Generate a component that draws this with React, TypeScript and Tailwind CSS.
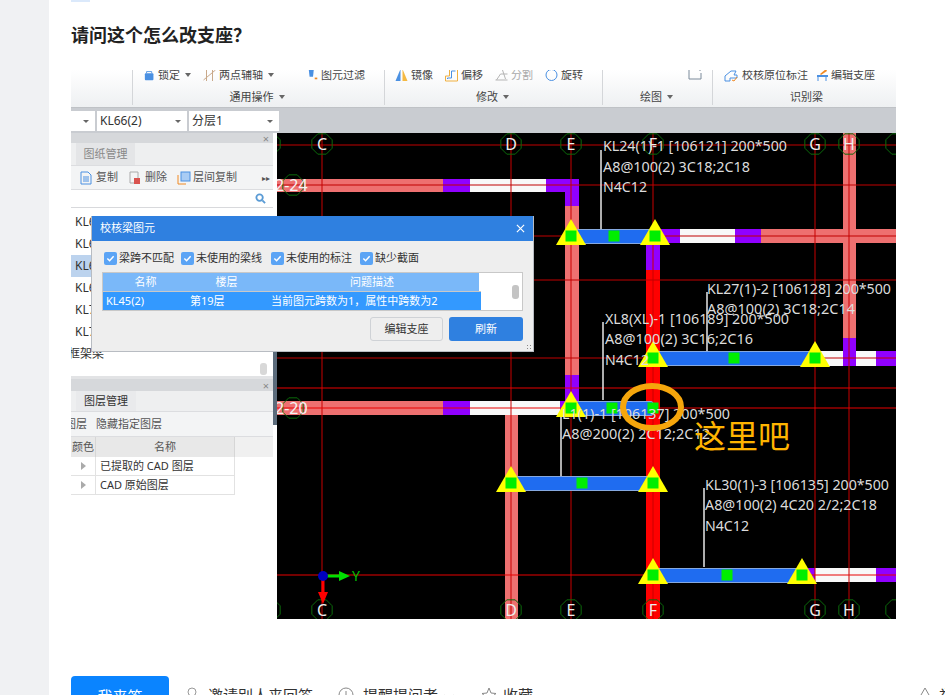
import type { ReactNode } from 'react'

const vLines = [322, 511, 571, 653, 815, 849]
const hLines = [145, 185, 236, 280, 358, 388, 408, 575]
const axes: [string, number][] = [['', 270], ['C', 322], ['D', 511], ['E', 571], ['F', 653], ['G', 815], ['H', 849], ['', 896]]

// beam rects: x, y, w, h, fill
const beams: [number, number, number, number, string][] = [
  [277, 179, 166, 13, '#ee7070'],
  [443, 179, 27, 13, '#9000ff'],
  [470, 179, 76, 13, '#f8f8f8'],
  [546, 179, 33, 13, '#9000ff'],
  [565, 192, 14, 14, '#9000ff'],
  [565, 206, 14, 169, '#ee7070'],
  [565, 375, 14, 26, '#9000ff'],
  [843, 133, 13, 205, '#ee7070'],
  [843, 338, 13, 28, '#9000ff'],
  [655, 229, 25, 14, '#9000ff'],
  [680, 229, 55, 14, '#f8f8f8'],
  [735, 229, 26, 14, '#9000ff'],
  [761, 229, 135, 14, '#ee7070'],
  [646, 243, 14, 27, '#9000ff'],
  [646, 270, 14, 349, '#ff0000'],
  [798, 351, 17, 15, '#9000ff'],
  [815, 351, 28, 15, '#f8f8f8'],
  [856, 351, 20, 15, '#f8f8f8'],
  [876, 351, 20, 15, '#9000ff'],
  [277, 401, 166, 14, '#ee7070'],
  [443, 401, 27, 14, '#9000ff'],
  [470, 401, 90, 14, '#f8f8f8'],
  [560, 401, 19, 14, '#9000ff'],
  [505, 415, 13, 204, '#ee7070'],
  [802, 568, 14, 14, '#9000ff'],
  [815, 568, 61, 14, '#f8f8f8'],
  [876, 568, 20, 14, '#9000ff'],
]

// blue beams: x1, x2, center y, mid square, triangle xs
const spans: [number, number, number, number, number[]][] = [
  [576, 654, 236, 614, [571, 655]],
  [654, 815, 358, 734, [653, 815]],
  [572, 653, 408, 612, [571]],
  [511, 653, 483, 582, [511, 653]],
  [653, 802, 575, 727, [653, 802]],
]

const leaders: [number, number, number][] = [
  [601, 150, 229],
  [707, 292, 351],
  [603, 322, 400],
  [561, 415, 476],
  [704, 488, 567],
]

const notes: [number, number, number, string][] = [
  [603, 151, 184, 'KL24(1)-1 [106121] 200*500'],
  [603, 172, 147, 'A8@100(2) 3C18;2C18'],
  [603, 192, 44, 'N4C12'],
  [707, 294, 184, 'KL27(1)-2 [106128] 200*500'],
  [707, 314, 148, 'A8@100(2) 3C18;2C14'],
  [605, 324, 184, 'XL8(XL)-1 [106189] 200*500'],
  [605, 344, 148, 'A8@100(2) 3C16;2C16'],
  [605, 365, 44, 'N4C12'],
  [562, 419, 168, 'L1(1)-1 [106137] 200*500'],
  [562, 439, 148, 'A8@200(2) 2C12;2C12'],
  [705, 490, 184, 'KL30(1)-3 [106135] 200*500'],
  [705, 510, 172, 'A8@100(2) 4C20 2/2;2C18'],
  [705, 531, 44, 'N4C12'],
]

function Octagon({ x, y }: { x: number; y: number }) {
  const r = 11
  const pts = Array.from({ length: 8 }, (_, i) => {
    const a = (Math.PI / 4) * i + Math.PI / 8
    return `${x + r * Math.cos(a)},${y + r * Math.sin(a)}`
  }).join(' ')
  return <polygon points={pts} fill="none" stroke="#0b6b0b" strokeWidth="1" />
}

function CadCanvas() {
  return (
    <svg viewBox="277 133 619 486" className="block w-[619px] h-[486px] bg-black">
      {beams.map(([x, y, w, h, fill], i) => (
        <rect key={i} x={x} y={y} width={w} height={h} fill={fill} />
      ))}
      {vLines.map((x) => (
        <line key={x} x1={x} x2={x} y1={133} y2={619} stroke="#c80000" strokeWidth="1" />
      ))}
      {hLines.map((y) => (
        <line key={y} x1={277} x2={896} y1={y} y2={y} stroke={y < 380 ? '#c00000' : '#e80000'} strokeWidth="1" />
      ))}
      {leaders.map(([x, y1, y2]) => (
        <line key={x} x1={x} x2={x} y1={y1} y2={y2} stroke="#e8e8e8" strokeWidth="1.5" />
      ))}
      {spans.map(([x1, x2, y]) => (
        <rect key={y} x={x1} y={y - 6.5} width={x2 - x1} height={14} rx="2" fill="#1f6cf0" stroke="#86a9e0" strokeWidth="1" />
      ))}
      {spans.map(([, , y, , tris]) =>
        tris.map((x) => (
          <polygon key={`${x}-${y}`} points={`${x},${y - 17} ${x - 15},${y + 9} ${x + 15},${y + 9}`} fill="#ffff00" />
        )),
      )}
      {spans.map(([x1, x2, y, mid, tris]) =>
        [tris[0], mid, tris[1] ?? x2].map((x) => (
          <rect key={`${x}-${y}`} x={x - 5.5} y={y - 5.5} width={11} height={11} fill="#00ee00" />
        )),
      )}
      {axes.map(([label, x]) => (
        <g key={x}>
          <Octagon x={x} y={144} />
          <Octagon x={x} y={610} />
          {label && <text x={x} y={150} textAnchor="middle" fontSize="16" fill="#eeeeee">{label}</text>}
          {label && <text x={x} y={616} textAnchor="middle" fontSize="16" fill="#eeeeee">{label}</text>}
        </g>
      ))}
      <Octagon x={293} y={185} />
      <Octagon x={293} y={408} />
      <text x={275} y={191} fontSize="16" fill="#f4f4f4">2-24</text>
      <text x={275} y={414} fontSize="16" fill="#f4f4f4">2-20</text>
      {notes.map(([x, y, w, t]) => (
        <text key={t + y} x={x} y={y} fontSize="14" fill="#dcdcdc" textLength={w} lengthAdjust="spacingAndGlyphs">{t}</text>
      ))}
      <ellipse cx="652" cy="407" rx="29" ry="21" fill="none" stroke="#f5a60c" strokeWidth="6" />
      <text x="694" y="448" fontSize="32" fill="#ffb400">这里吧</text>
      <line x1="323" y1="576" x2="342" y2="576" stroke="#00e000" strokeWidth="3" />
      <polygon points="339,571 350,576 339,581" fill="#00e000" />
      <text x="352" y="581" fontSize="14" fill="#00c000">Y</text>
      <line x1="323" y1="576" x2="323" y2="596" stroke="#ff0000" strokeWidth="3" />
      <polygon points="318,592 328,592 323,604" fill="#ff0000" />
      <circle cx="323" cy="576" r="5" fill="#0000c0" />
    </svg>
  )
}

function Caret() {
  return <span className="ml-[5px] w-0 h-0 border-x-[3px] border-x-transparent border-t-[4px] border-t-[#666]" />
}

function Tool({ icon, label, caret, className, muted }: { icon: ReactNode; label: string; caret?: boolean; className: string; muted?: boolean }) {
  return (
    <div className={`flex items-center shrink-0 ${className}`}>
      {icon}
      <span className={`ml-[2px] ${muted ? 'text-[#aaa]' : 'text-[#444]'}`}>{label}</span>
      {caret && <Caret />}
    </div>
  )
}

function Ico({ children, className }: { children: ReactNode; className?: string }) {
  return (
    <svg viewBox="0 0 14 14" className={`h-[14px] shrink-0 ${className ?? 'w-[14px]'}`} fill="none">
      {children}
    </svg>
  )
}

function RibbonGroup({ title, caret, className, titleClass, children }: { title: string; caret?: boolean; className: string; titleClass: string; children: ReactNode }) {
  return (
    <div className={`flex flex-col border-l border-[#d4d6d9] h-[35px] ${className}`}>
      <div className="flex h-[10px] leading-[10px] items-center">{children}</div>
      <div className={`mt-[9px] h-[16px] flex items-center justify-center text-[#444] ${titleClass}`}>
        {title}
        {caret && <Caret />}
      </div>
    </div>
  )
}

function Ribbon() {
  return (
    <div className="flex h-[38px] overflow-hidden bg-gradient-to-b from-white to-[#eef0f2] border-b border-[#bfc2c6] text-[11px]">
      <div className="w-[61px] shrink-0" />
      <RibbonGroup title="通用操作" caret className="w-[252px]" titleClass="pr-[3px]">
        <div className="pl-[11px] flex">
          <Tool
            className="w-[58px]"
            caret
            label="锁定"
            icon={<Ico className="w-[12px]"><rect x="1" y="5" width="10" height="8" rx="1" fill="#4a90e2" /><path d="M3 5V3h6v2" stroke="#4a90e2" /></Ico>}
          />
          <Tool
            className="w-[105px]"
            caret
            label="两点辅轴"
            icon={<Ico className="w-[15px]"><path d="M1 12 13 2M4 1v12M10 1v12" stroke="#c9a98a" /></Ico>}
          />
          <Tool
            className="w-[70px]"
            label="图元过滤"
            icon={<Ico className="w-[12px]"><path d="M2 0h6L7 9H3z" fill="#4a90e2" /><path d="M9 11h3" stroke="#f08a24" strokeWidth="2" /></Ico>}
          />
        </div>
      </RibbonGroup>
      <RibbonGroup title="修改" caret className="w-[218px]" titleClass="pr-[2px]">
        <div className="pl-[9px] flex">
          <Tool className="w-[50px]" label="镜像" icon={<Ico className="w-[15px]"><path d="M6 1v12H1z" fill="#4a90e2" /><path d="M8 1v12h5z" fill="#f5b942" /></Ico>} />
          <Tool className="w-[50px]" label="偏移" icon={<Ico className="w-[15px]"><path d="M1 13V8h4V1h8v12z" stroke="#f0b040" /><path d="M3 11V10h4V3h4" stroke="#4a90e2" /></Ico>} />
          <Tool className="w-[50px]" muted label="分割" icon={<Ico className="w-[15px]"><path d="M1 12h12M2 12l4-6h7M8 2l3 9" stroke="#b5b5b5" /></Ico>} />
          <Tool className="w-[50px]" label="旋转" icon={<Ico className="w-[15px]"><circle cx="7" cy="7" r="5.500" stroke="#4a90e2" /></Ico>} />
        </div>
      </RibbonGroup>
      <RibbonGroup title="绘图" caret className="w-[110px]" titleClass="pr-[2px]">
        <div className="flex-1 flex justify-end pr-[10px]">
          <svg viewBox="0 0 14 12" className="w-[14px] h-[12px]" fill="none">
            <path d="M1 1v9h12V4M11 1h2" stroke="#7a8a9a" />
          </svg>
        </div>
      </RibbonGroup>
      <RibbonGroup title="识别梁" className="w-[184px]" titleClass="pl-[4px]">
        <div className="pl-[9px] flex">
          <Tool
            className="w-[93px]"
            label="校核原位标注"
            icon={<Ico className="w-[18px]"><path d="M1 13V8l6-5h5l-2 4h3v3H6v3z" stroke="#4a90e2" /><path d="m8 12 2 1 3-4" stroke="#f08a24" /></Ico>}
          />
          <Tool
            className="w-[75px]"
            label="编辑支座"
            icon={<Ico><path d="M2 8h11" stroke="#4a90e2" strokeWidth="2" /><path d="M3 13V9M11 13V9" stroke="#4a90e2" /><path d="m5 6 6-5 1 2-6 4z" fill="#f08a24" /></Ico>}
          />
        </div>
      </RibbonGroup>
    </div>
  )
}

function Select({ label, className }: { label?: string; className: string }) {
  return (
    <div className={`h-[20px] bg-white flex items-center justify-between pl-[3px] pr-[6px] text-[12px] text-[#333] shrink-0 ${className}`}>
      <span>{label}</span>
      <span className="w-0 h-0 border-x-[3px] border-x-transparent border-t-[3px] border-t-[#666]" />
    </div>
  )
}

function PanelHead({ className }: { className: string }) {
  return (
    <div className={`bg-[#d6d8db] flex items-center justify-end pr-[4px] text-[11px] leading-none text-[#888] ${className}`}>×</div>
  )
}

function ListRow({ label, selected }: { label: string; selected?: boolean }) {
  return (
    <div className={`h-[22px] leading-[22px] pl-[4px] ${selected ? 'bg-[#bcd3ee]' : ''}`}>{label}</div>
  )
}

function SidePanels() {
  return (
    <div className="w-[202px] shrink-0 bg-white text-[11px] text-[#444] flex flex-col overflow-hidden">
      <PanelHead className="h-[10px]" />
      <div className="h-[22px] bg-[#eeeff0] pl-[5px] flex">
        <div className="w-[59px] bg-[#e4e5e7] flex items-center justify-center text-[#888]">图纸管理</div>
      </div>
      <div className="h-[25px] bg-[#f3f4f5] border-y border-[#dcdde0] flex items-center pl-[9px] text-[#555]">
        <svg viewBox="0 0 12 14" className="w-[12px] h-[14px]" fill="none">
          <path d="M1 1h7l3 3v9H1z" stroke="#4a90e2" />
          <path d="M3 6h6M3 8h6M3 10h6" stroke="#4a90e2" />
        </svg>
        <span className="ml-[4px] w-[33px]">复制</span>
        <svg viewBox="0 0 12 14" className="w-[12px] h-[14px]" fill="none">
          <path d="M1 1h8v11H1z" stroke="#aaa" />
          <rect x="5" y="7" width="6" height="6" fill="#d9534f" />
        </svg>
        <span className="ml-[4px] w-[32px]">删除</span>
        <svg viewBox="0 0 14 14" className="w-[14px] h-[14px]" fill="none">
          <path d="M1 4v9h8" stroke="#f08a24" />
          <rect x="4" y="1" width="9" height="9" fill="#a9ccf4" stroke="#4a90e2" />
        </svg>
        <span className="ml-[2px]">层间复制</span>
        <span className="ml-auto mr-[3px] text-[8px] text-[#555]">▸▸</span>
      </div>
      <div className="h-[18px] border-b border-[#d8d9dc] flex items-center justify-end pr-[7px]">
        <svg viewBox="0 0 12 12" className="w-[11px] h-[11px]" fill="none">
          <circle cx="5" cy="5" r="3.500" stroke="#5a9bd5" strokeWidth="2" />
          <path d="m8 8 3 3" stroke="#5a9bd5" strokeWidth="2" />
        </svg>
      </div>
      <div className="h-[168px] relative text-[12px] text-[#333] pt-[3px]">
        <ListRow label="KL63(2)" />
        <ListRow label="KL64(2)" />
        <ListRow label="KL66(2)" selected />
        <ListRow label="KL68(2)" />
        <ListRow label="KL70(2)" />
        <ListRow label="KL72(2)" />
        <div className="h-[22px] leading-[22px] -ml-[3px]">框架梁</div>
        <div className="absolute right-[6px] bottom-[1px] w-[7px] h-[12px] bg-[#d8d8d8] rounded-[3px]" />
      </div>
      <div className="h-[3px] bg-[#e2e3e5]" />
      <PanelHead className="h-[12px]" />
      <div className="h-[21px] bg-[#eeeff0] pl-[5px] flex border-b border-[#dcdde0]">
        <div className="w-[60px] bg-[#e9eaec] flex items-center justify-center text-[#333]">图层管理</div>
      </div>
      <div className="h-[25px] bg-[#f3f4f5] flex items-center text-[#555] border-b border-[#dcdde0]">
        <span className="-ml-[6px]">图层</span>
        <span className="ml-[9px]">隐藏指定图层</span>
      </div>
      <div className="h-[20px] flex bg-[#f0f0f0] text-[#555]">
        <div className="w-[25px] bg-[#e8e8e8] border-r border-[#d6d6d6] flex items-center justify-center">颜色</div>
        <div className="w-[139px] bg-[#e8e8e8] border-r border-[#d6d6d6] flex items-center justify-center">名称</div>
      </div>
      {['已提取的 CAD 图层', 'CAD 原始图层'].map((name) => (
        <div key={name} className="h-[19px] w-[164px] flex border-b border-r border-[#e2e2e2] text-[#333]">
          <div className="w-[25px] border-r border-[#e2e2e2] flex items-center justify-center text-[#aaa]">
            <span className="w-0 h-0 border-y-[4px] border-y-transparent border-l-[5px] border-l-[#aaa]" />
          </div>
          <div className="pl-[4px] leading-[17px]">{name}</div>
        </div>
      ))}
    </div>
  )
}

function Check({ label, className }: { label: string; className: string }) {
  return (
    <div className={`flex items-center shrink-0 ${className}`}>
      <span className="w-[13px] h-[13px] rounded-[2px] bg-[#5ba4f5] flex items-center justify-center">
        <svg viewBox="0 0 10 10" className="w-[9px] h-[9px]" fill="none">
          <path d="m1.500 5 2.500 2.500 4.500-5" stroke="#fff" strokeWidth="1.600" />
        </svg>
      </span>
      <span className="ml-[2px]">{label}</span>
    </div>
  )
}

function Dialog() {
  return (
    <div className="absolute left-[20px] top-[146px] w-[443px] h-[136px] bg-[#eeeeee] border border-[#b8bcc2] border-t-0 text-[11px] text-[#333]">
      <div className="h-[25px] bg-[#2f80e0] flex items-center justify-between pl-[8px] pr-[8px] text-white">
        <span>校核梁图元</span>
        <svg viewBox="0 0 10 10" className="w-[9px] h-[9px]" fill="none">
          <path d="m1 1 8 8M9 1 1 9" stroke="#fff" strokeWidth="1.300" />
        </svg>
      </div>
      <div className="flex pl-[12px] mt-[10px] h-[14px]">
        <Check className="w-[77px]" label="梁跨不匹配" />
        <Check className="w-[90px]" label="未使用的梁线" />
        <Check className="w-[89px]" label="未使用的标注" />
        <Check className="w-[70px]" label="缺少截面" />
      </div>
      <div className="relative ml-[10px] mt-[7px] w-[421px] h-[39px] bg-white border border-[#c8c8c8] text-white">
        <div className="h-[18px] w-[376px] bg-[#7ab8f9] flex items-center">
          <span className="w-[85px] text-center">名称</span>
          <span className="w-[77px] text-center">楼层</span>
          <span className="w-[214px] text-center">问题描述</span>
        </div>
        <div className="h-[19px] w-[378px] bg-[#3399ff] flex items-center border-t border-[#c8c8c8]">
          <span className="w-[87px] pl-[3px]">KL45(2)</span>
          <span className="w-[81px]">第19层</span>
          <span>当前图元跨数为1，属性中跨数为2</span>
        </div>
        <div className="absolute right-[3px] top-[12px] w-[7px] h-[14px] bg-[#c4c4c4] rounded-[3px]" />
      </div>
      <div className="flex justify-end gap-[6px] pr-[10px] mt-[6px]">
        <div className="w-[73px] h-[24px] rounded-[3px] border border-[#cfd2d6] flex items-center justify-center">编辑支座</div>
        <div className="w-[74px] h-[24px] rounded-[3px] bg-[#2f80e0] text-white flex items-center justify-center">刷新</div>
      </div>
      <span className="absolute right-[1px] bottom-[1px] w-[6px] h-[6px] bg-[radial-gradient(#888_1px,transparent_1px)] bg-[length:3px_3px]" />
    </div>
  )
}

function Screenshot() {
  return (
    <div className="relative w-[825px] h-[549px] overflow-hidden">
      <Ribbon />
      <div className="h-[25px] bg-[#c9ccd1] flex items-center gap-[2px] pt-[1px]">
        <Select className="w-[24px]" />
        <Select className="w-[90px]" label="KL66(2)" />
        <Select className="w-[90px]" label="分层1" />
      </div>
      <div className="flex">
        <SidePanels />
        <div className="w-[4px] shrink-0 bg-white flex flex-col">
          <div className="mt-[217px] h-[75px] bg-[#5b6b7b]" />
        </div>
        <CadCanvas />
      </div>
      <Dialog />
    </div>
  )
}

function ActionLink({ icon, label, className }: { icon: ReactNode; label: string; className: string }) {
  return (
    <div className={`flex items-center shrink-0 h-[38px] text-[#333] ${className}`}>
      {icon}
      <span>{label}</span>
    </div>
  )
}

export default function App() {
  return (
    <div className="flex h-[695px] overflow-hidden bg-white font-['Noto_Sans','Noto_Sans_CJK_SC',sans-serif]">
      <div className="w-[49px] shrink-0 bg-[#f0f1f3]" />
      <div className="flex-1 pl-[22px]">
        <div className="w-[19px] h-[2px] bg-[#dbe9fb]" />
        <h1 className="mt-[20px] h-[26px] leading-[26px] text-[18px] font-bold text-[#222]">请问这个怎么改支座？</h1>
        <div className="mt-[22px]">
          <Screenshot />
        </div>
        <div className="mt-[57px] flex text-[15px] whitespace-nowrap">
          <div className="w-[98px] h-[40px] bg-[#0a84ff] rounded-t-[4px] text-white flex items-center justify-center shrink-0">我来答</div>
          <ActionLink
            className="ml-[18px]"
            label="邀请别人来回答"
            icon={
              <svg viewBox="0 0 10 16" className="w-[10px] h-[16px] mr-[11px]" fill="none">
                <circle cx="5" cy="5" r="4" stroke="#999" />
                <path d="M1 15c0-4 8-4 8 0" stroke="#999" />
              </svg>
            }
          />
          <ActionLink
            className="ml-[25px]"
            label="提醒提问者"
            icon={
              <svg viewBox="0 0 16 16" className="w-[16px] h-[16px] mr-[9px]" fill="none">
                <circle cx="8" cy="8" r="7" stroke="#888" />
                <path d="M8 4v5" stroke="#888" />
              </svg>
            }
          />
          <svg viewBox="0 0 12 6" className="ml-[5px] mt-[18px] w-[12px] h-[6px] shrink-0" fill="none">
            <path d="m1 1 5 4 5-4" stroke="#999" />
          </svg>
          <ActionLink
            className="ml-[26px]"
            label="收藏"
            icon={
              <svg viewBox="0 0 16 16" className="w-[16px] h-[16px] mr-[6px]" fill="none">
                <path d="m8 1 2 5 5 .5-4 3.500 1.200 5L8 12.500 3.800 15 5 10 1 6.500 6 6z" stroke="#888" />
              </svg>
            }
          />
          <ActionLink
            className="ml-[383px]"
            label="举报"
            icon={
              <svg viewBox="0 0 18 16" className="w-[18px] h-[16px] mr-[5px]" fill="none">
                <path d="M9 1 17 15H1z" stroke="#888" />
              </svg>
            }
          />
        </div>
      </div>
    </div>
  )
}
